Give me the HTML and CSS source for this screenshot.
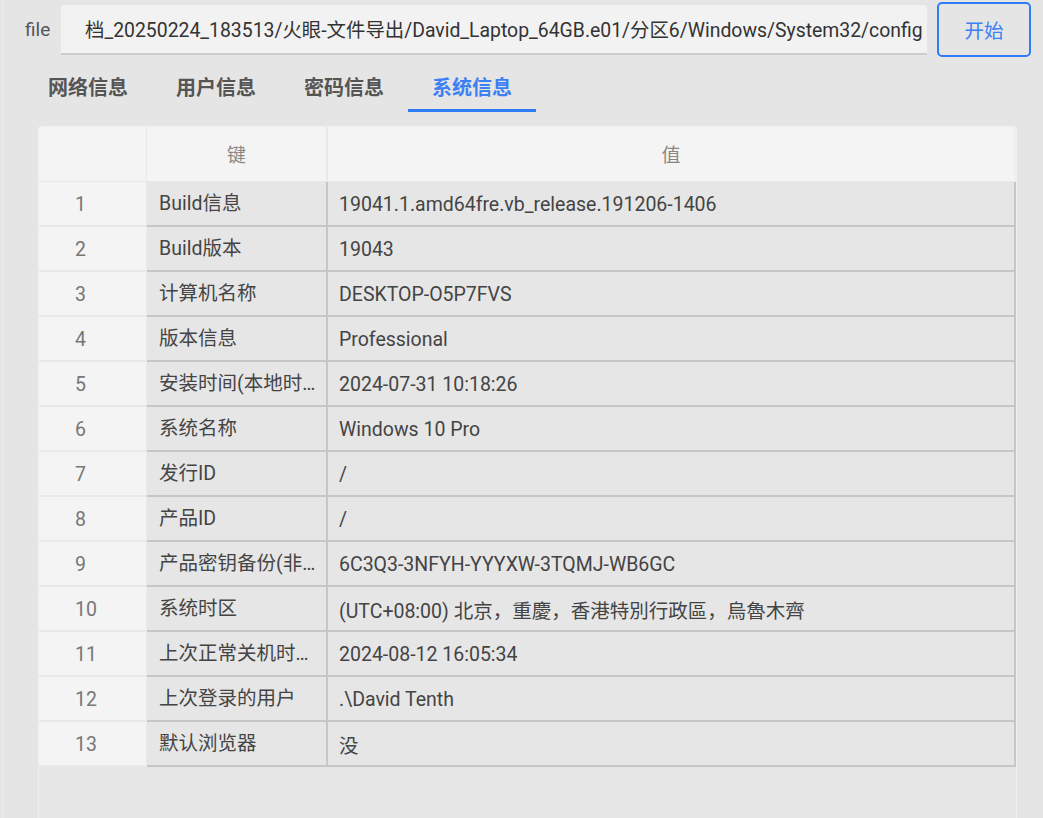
FILE: index.html
```html
<!DOCTYPE html>
<html lang="zh-CN">
<head>
<meta charset="utf-8">
<title>系统信息</title>
<link rel="stylesheet" href="styles.css">
</head>
<body>
<div class="page">
  <div class="top">
    <span class="label">file</span>
    <div class="path"><span class="path-text">档_20250224_183513/火眼-文件导出/David_Laptop_64GB.e01/分区6/Windows/System32/config</span></div>
    <button class="start">开始</button>
  </div>
  <div class="tabs">
    <div class="tab">网络信息</div>
    <div class="tab">用户信息</div>
    <div class="tab">密码信息</div>
    <div class="tab active">系统信息</div>
  </div>
  <div class="card">
    <div class="grid">
      <div class="hd idx"></div>
      <div class="hd key">键</div>
      <div class="hd val">值</div>

      <div class="c idx">1</div><div class="c key">Build信息</div><div class="c val">19041.1.amd64fre.vb_release.191206-1406</div>
      <div class="c idx">2</div><div class="c key">Build版本</div><div class="c val">19043</div>
      <div class="c idx">3</div><div class="c key">计算机名称</div><div class="c val">DESKTOP-O5P7FVS</div>
      <div class="c idx">4</div><div class="c key">版本信息</div><div class="c val">Professional</div>
      <div class="c idx">5</div><div class="c key">安装时间(本地时间)</div><div class="c val">2024-07-31 10:18:26</div>
      <div class="c idx">6</div><div class="c key">系统名称</div><div class="c val">Windows 10 Pro</div>
      <div class="c idx">7</div><div class="c key">发行ID</div><div class="c val">/</div>
      <div class="c idx">8</div><div class="c key">产品ID</div><div class="c val">/</div>
      <div class="c idx">9</div><div class="c key">产品密钥备份(非OEM)</div><div class="c val">6C3Q3-3NFYH-YYYXW-3TQMJ-WB6GC</div>
      <div class="c idx">10</div><div class="c key">系统时区</div><div class="c val">(UTC+08:00) 北京，重慶，香港特別行政區，烏魯木齊</div>
      <div class="c idx">11</div><div class="c key">上次正常关机时间(本地时间)</div><div class="c val">2024-08-12 16:05:34</div>
      <div class="c idx">12</div><div class="c key">上次登录的用户</div><div class="c val">.\David Tenth</div>
      <div class="c idx">13</div><div class="c key">默认浏览器</div><div class="c val">没</div>
    </div>
  </div>
</div>
</body>
</html>
```

FILE: styles.css
```css
* { box-sizing: border-box; }
html, body {
  margin: 0;
  height: 100%;
  overflow: hidden;
  background: #e5e5e5;
}
body {
  font-family: Roboto, "Noto Sans CJK SC", sans-serif;
  color: #444;
}
.page {
  margin-left: 2px;
  border-left: 1px solid #ececec;
  height: 100%;
}
.top {
  display: flex;
  align-items: center;
  height: 59px;
  padding-left: 22px;
}
.label {
  width: 36px;
  font-size: 19px;
  color: #555;
}
.path {
  width: 866px;
  height: 50px;
  background: #f2f2f2;
  border-radius: 4px 4px 0 0;
  border-bottom: 2px solid #cdcdcd;
  display: flex;
  align-items: center;
  padding-left: 24px;
  overflow: hidden;
  white-space: nowrap;
}
.path-text {
  font-size: 19.4px;
  color: #333;
}
.start {
  margin-left: 10px;
  width: 94px;
  height: 55px;
  border: 2px solid #2e7cf6;
  border-radius: 5px;
  background: #e5e5e5;
  color: #3b80f4;
  font-family: Roboto, "Noto Sans CJK SC", sans-serif;
  font-size: 19.5px;
  padding: 0;
}
.tabs {
  display: flex;
  margin-left: 21px;
  height: 53px;
}
.tab {
  width: 128px;
  padding-top: 4px;
  display: flex;
  align-items: center;
  justify-content: center;
  font-size: 20px;
  font-weight: 700;
  color: #555;
  border-bottom: 3px solid transparent;
}
.tab.active {
  color: #3b80f4;
  border-bottom-color: #2e7cf6;
}
.card {
  margin-top: 14px;
  margin-left: 35px;
  width: 979px;
  height: 720px;
  border: 1px solid #efefef;
  border-bottom: none;
  border-radius: 4px 4px 0 0;
  background: #e6e6e6;
}
.grid {
  display: grid;
  grid-template-columns: 108px 181px 688px;
}
.hd {
  height: 55px;
  padding-bottom: 1px;
  background: #f4f4f4;
  border-bottom: 1px solid #e8e8e8;
  display: flex;
  align-items: center;
  justify-content: center;
  font-size: 19px;
  color: #8a8682;
}
.hd.idx, .hd.key { border-right: 1px solid #e8e8e8; }
.hd.key { border-right-width: 2px; }
.hd.val { border-right: 2px solid #efefef; }
.c {
  height: 45px;
  padding-top: 1px;
  display: flex;
  align-items: center;
  font-size: 19.5px;
  white-space: nowrap;
  overflow: hidden;
}
.c.idx {
  background: #f4f4f4;
  color: #777;
  padding-left: 36px;
  border-right: 1px solid #e9e9e9;
  border-bottom: 2px solid #e9e9e9;
}
.c.key, .c.val {
  background: #e6e6e6;
  color: #444;
  border-right: 2px solid #c6c6c6;
  border-bottom: 2px solid #c6c6c6;
}
.c.key {
  display: block;
  line-height: 42px;
  padding-left: 12px;
  padding-right: 2px;
  text-overflow: ellipsis;
}
.c.val { padding-left: 11px; }
```
